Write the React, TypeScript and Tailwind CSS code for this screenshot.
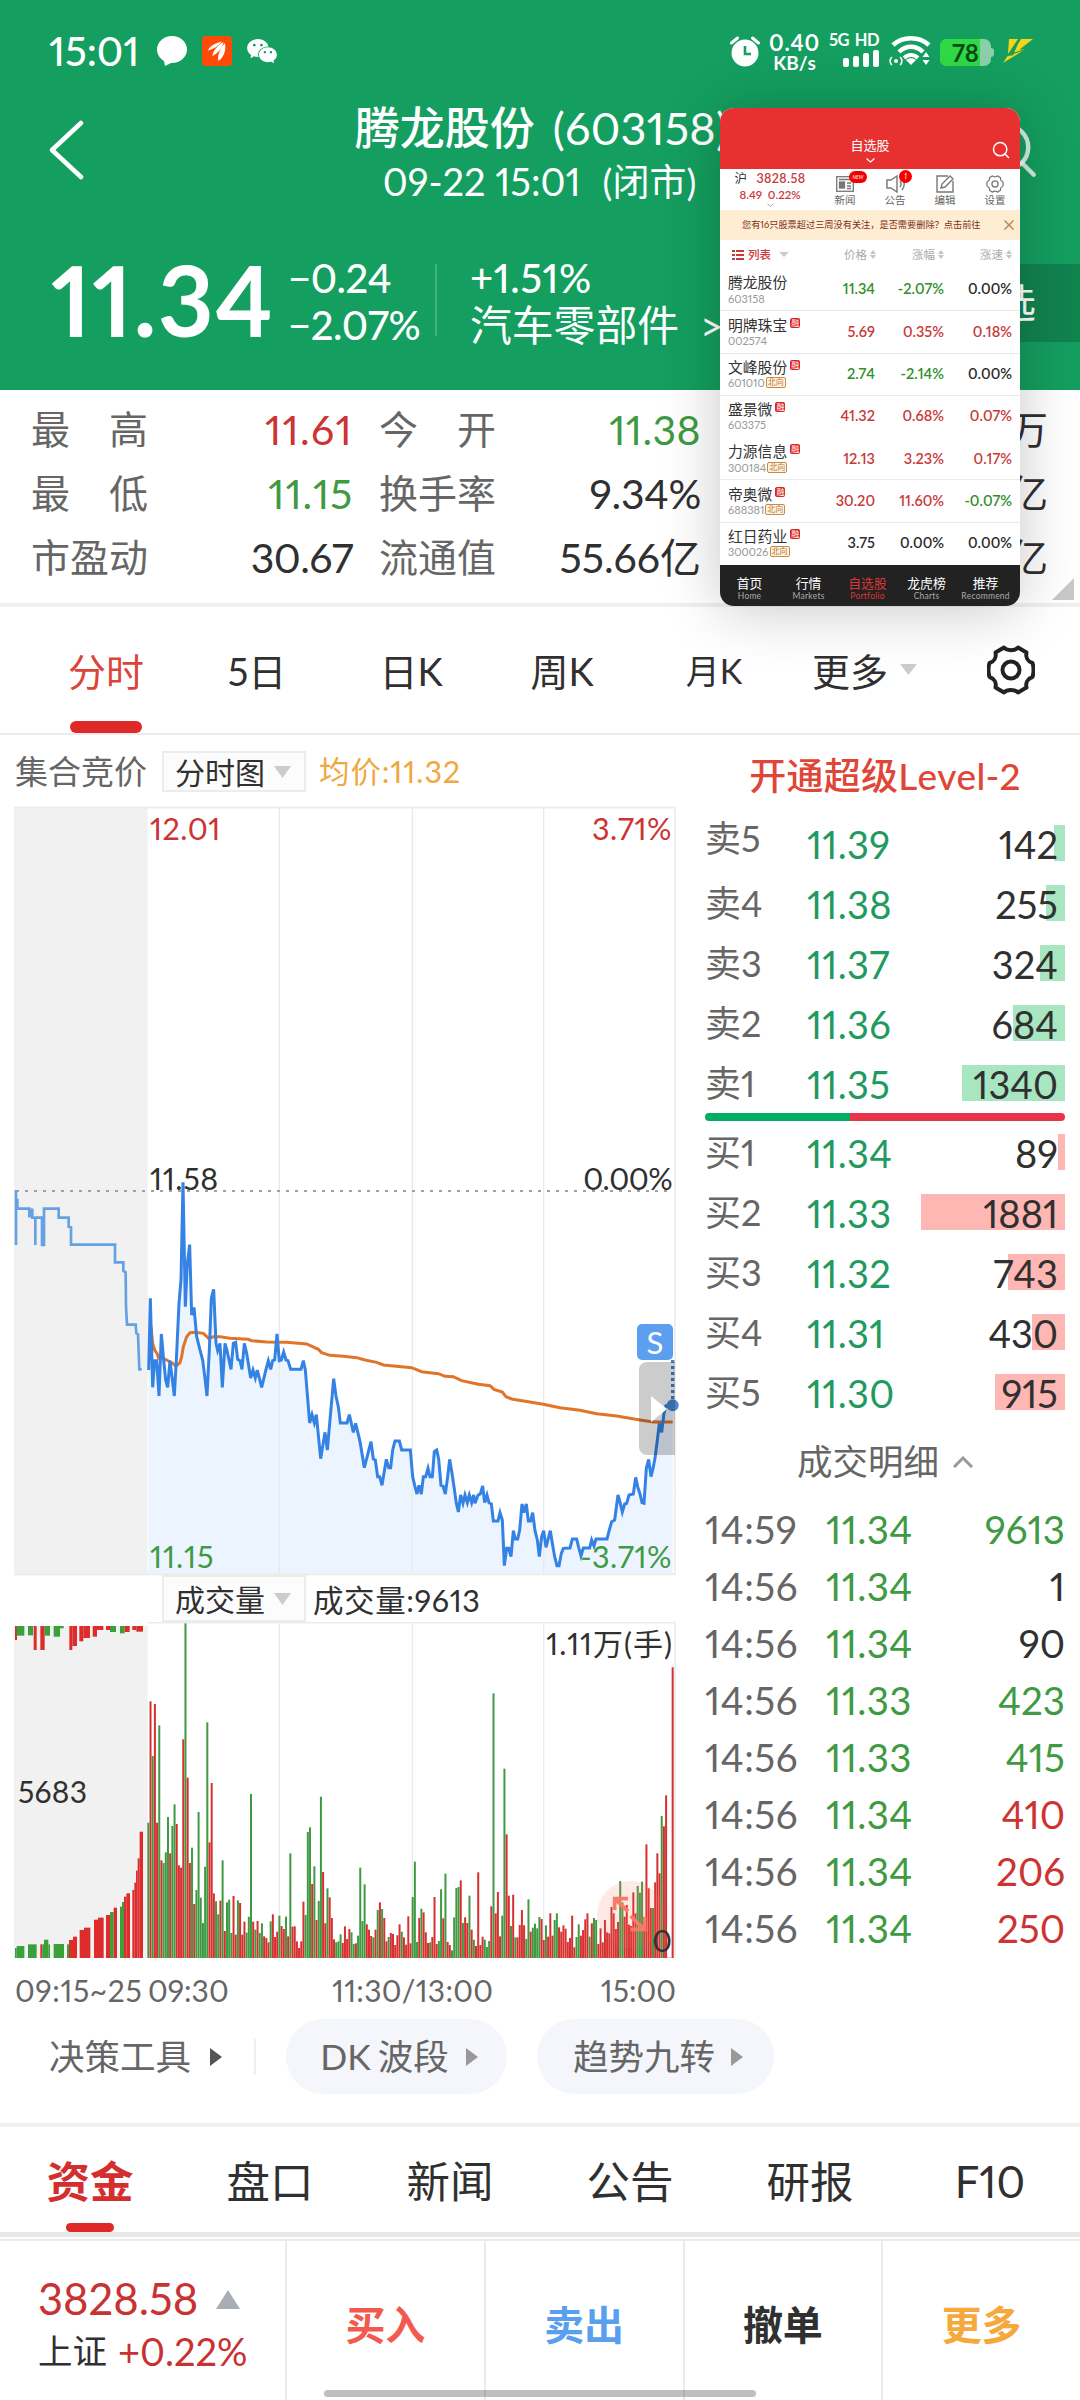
import { Search, X } from 'lucide-react';
import { AiFillWechat } from 'react-icons/ai';

const RED = '#d63030';
const GREEN = '#3f9a43';

const stats = [
  ['最　高', '11.61', 'text-[#cc3333] tracking-[1.3px]', '今　开', '11.38', 'text-[#3f9a43] tracking-[0.4px]', '万'],
  ['最　低', '11.15', 'text-[#3f9a43] tracking-[0.8px]', '换手率', '9.34%', 'text-[#303030] tracking-[-0.3px]', '亿'],
  ['市盈动', '30.67', 'text-[#303030] tracking-[-0.6px]', '流通值', '55.66亿', 'text-[#303030]', '亿'],
];

const sells = [
  { label: '卖5', price: '11.39', volume: 142, bar: 11 },
  { label: '卖4', price: '11.38', volume: 255, bar: 19 },
  { label: '卖3', price: '11.37', volume: 324, bar: 25 },
  { label: '卖2', price: '11.36', volume: 684, bar: 52 },
  { label: '卖1', price: '11.35', volume: 1340, bar: 103 },
];

const buys = [
  { label: '买1', price: '11.34', volume: 89, bar: 7 },
  { label: '买2', price: '11.33', volume: 1881, bar: 144 },
  { label: '买3', price: '11.32', volume: 743, bar: 57 },
  { label: '买4', price: '11.31', volume: 430, bar: 33 },
  { label: '买5', price: '11.30', volume: 915, bar: 70 },
];

const trades = [
  ['14:59', '11.34', '9613', 'text-[#3f9a43]'],
  ['14:56', '11.34', '1', 'text-[#303030]'],
  ['14:56', '11.34', '90', 'text-[#303030]'],
  ['14:56', '11.33', '423', 'text-[#3f9a43]'],
  ['14:56', '11.33', '415', 'text-[#3f9a43]'],
  ['14:56', '11.34', '410', 'text-[#cc3333]'],
  ['14:56', '11.34', '206', 'text-[#cc3333]'],
  ['14:56', '11.34', '250', 'text-[#cc3333]'],
];

const watchlist = [
  { name: '腾龙股份', code: '603158', price: '11.34', change: '-2.07%', speed: '0.00%', c: 'g', s: 'k', margin: false, north: false, line: true },
  { name: '明牌珠宝', code: '002574', price: '5.69', change: '0.35%', speed: '0.18%', c: 'r', s: 'r', margin: true, north: false, line: true },
  { name: '文峰股份', code: '601010', price: '2.74', change: '-2.14%', speed: '0.00%', c: 'g', s: 'k', margin: true, north: true, line: true },
  { name: '盛景微', code: '603375', price: '41.32', change: '0.68%', speed: '0.07%', c: 'r', s: 'r', margin: true, north: false, line: false },
  { name: '力源信息', code: '300184', price: '12.13', change: '3.23%', speed: '0.17%', c: 'r', s: 'r', margin: true, north: true, line: true },
  { name: '帝奥微', code: '688381', price: '30.20', change: '11.60%', speed: '-0.07%', c: 'r', s: 'g', margin: true, north: true, line: true },
  { name: '红日药业', code: '300026', price: '3.75', change: '0.00%', speed: '0.00%', c: 'k', s: 'k', margin: true, north: true, line: false },
];

const tone: Record<string, string> = {
  r: 'text-[#c83a3a]',
  g: 'text-[#2f8f2a]',
  k: 'text-[#2b2b2b]',
};

// pre-open auction price
const auctionLine =
  '48,150 48,315 48,180 52,180 52,206 88,206 88,232 97,206 97,233 106,233 106,315 106,233 126,233 126,315 132,315 132,206 176,206 176,233 206,233 206,260 213,262 213,314 345,314 345,367 370,367 370,393 377,397 378,500 381,554 407,554 409,580 414,583 416,635 418,688 425,688';

// minute price
const priceLine =
  '446,690 451,475 458,742 464,662 470,662 477,768 484,582 490,650 497,720 503,742 510,662 523,768 530,640 537,490 543,420 549,127 556,500 562,370 569,314 575,525 582,502 590,590 600,630 608,660 615,715 621,768 628,630 634,475 641,448 648,610 653,632 660,610 667,742 675,610 681,632 693,688 700,610 707,607 713,658 720,662 726,688 733,610 740,640 752,714 759,690 766,714 772,690 785,742 798,688 805,662 812,688 818,662 824,660 831,582 838,662 844,660 851,636 858,660 864,662 872,688 903,688 910,662 916,690 929,849 936,824 943,849 949,824 962,956 975,877 982,930 1001,716 1008,768 1015,800 1021,849 1041,849 1048,824 1060,877 1067,850 1080,905 1093,983 1113,905 1120,957 1126,960 1133,1010 1139,1010 1146,1036 1159,958 1166,983 1172,983 1178,930 1185,903 1198,903 1205,930 1231,930 1238,1010 1244,1036 1251,1062 1257,1036 1264,1062 1270,1010 1277,1010 1284,985 1290,1010 1297,1010 1303,935 1310,930 1316,957 1323,1036 1329,1038 1336,1062 1343,1010 1349,958 1356,1000 1362,1040 1369,1090 1375,1116 1382,1065 1389,1090 1395,1065 1402,1088 1408,1065 1415,1088 1421,1065 1425,1090 1434,1065 1441,1062 1448,1038 1454,1088 1461,1065 1467,1088 1474,1092 1480,1143 1494,1143 1500,1118 1507,1140 1513,1277 1520,1225 1526,1225 1533,1250 1540,1172 1546,1197 1553,1197 1559,1170 1566,1092 1572,1118 1579,1092 1585,1143 1592,1143 1598,1118 1605,1172 1612,1200 1618,1250 1625,1190 1631,1172 1638,1222 1651,1172 1657,1210 1664,1250 1671,1277 1677,1277 1684,1240 1690,1225 1710,1224 1717,1197 1730,1197 1736,1222 1743,1248 1750,1224 1769,1224 1775,1200 1782,1218 1788,1197 1821,1197 1828,1170 1835,1145 1844,1140 1854,1065 1861,1090 1867,1116 1874,1092 1880,1090 1887,1065 1900,1062 1907,1012 1913,1040 1920,1062 1926,1088 1932,1090 1939,985 1946,958 1953,1010 1959,985 1965,955 1972,900 1978,850 1985,877 1992,820 1998,797 2018,795';

// running average price
const averageLine =
  '453,560 458,610 464,630 471,640 476,655 490,655 500,660 515,668 528,678 540,668 545,650 550,620 560,590 570,578 585,577 610,580 627,596 640,590 660,590 690,595 745,598 755,602 800,606 860,607 920,612 955,628 965,638 990,646 1030,649 1070,653 1095,660 1130,667 1150,675 1235,683 1265,695 1315,701 1335,709 1360,710 1385,722 1435,733 1470,737 1482,748 1507,756 1518,770 1535,777 1630,793 1680,803 1740,811 1790,821 1850,828 1920,840 1960,846 2018,846';

// one entry per minute: direction + top of the bar
const volumes =
  'g788 r424 g588 r432 r788 g496 r901 g909 g877 g771 r880 g798 g733 r792 r916 r923 r538 g190 r653 r909 g863 r1032 g990 g756 g1013 g1089 g920 g487 r847 r669 r1000 g1024 g1063 r1022 g901 r1113 g1027 g1019 g1119 r1008 r1124 g1021 r1029 r1124 r1085 g1118 g1070 g702 r1085 g1109 r1083 g1119 g1090 r1129 r1134 r1147 g1084 r1063 r1131 r1115 g1067 r1098 r1107 g1070 r1129 g880 r1100 r1099 r1144 r1164 r1144 r1025 g1065 g816 g802 r972 g919 r1080 g1023 g710 r936 r1090 g985 r1012 r1074 r1138 g1147 g1144 g1123 r1149 r1099 r1137 r1107 g1117 g1152 r1150 g1127 g923 g1083 g973 r1093 r1109 r1128 g1132 r1109 g1050 r1027 g1047 r1074 r1144 g1131 r1119 r1122 r1155 r1126 r1093 g1115 r1132 r1154 r1069 r1150 g1011 g905 g1146 r1074 g1046 r1057 r1117 r1149 g1147 r1131 r1011 r1152 g1143 g988 r1075 g941 r1146 r1155 g1171 g1072 g984 g981 r961 g1089 r1072 r1089 g1007 r1109 g1139 r1158 r937 r1155 r1130 g1139 g1161 g1143 r1039 g400 r1060 r996 r1129 g1067 g626 r823 r1007 g1098 r1004 g1132 r1132 r1095 r1050 r1096 g1137 g1018 r1115 g1103 g1091 g1105 g1071 r1077 r1140 g1096 r1130 r1060 r1127 g1080 g1060 r1102 r1115 r1096 r1106 r1146 r1134 r1067 r1162 g1131 g1093 r1127 r1110 r1078 r1060 g1130 r1090 g1074 g1080 r1152 r1105 r1147 r1080 r1117 r1120 r1041 r1060 r1107 r1086 g963 g1027 r1070 r1035 r1094 r1098 r997 r1060 g978 g998 g965 r1090 r853 r985 r1044 g1044 r967 r880 r940 g768 r799 r706 r1193 r1193 r322'.split(' ');

// auction bars: [direction, x, width, edge]
const unmatched: [string, number, number, number][] = [
  ['r', 45, 6, 240], ['g', 50, 23, 227], ['g', 84, 15, 226], ['r', 101, 9, 270], ['r', 121, 13, 270],
  ['g', 134, 16, 227], ['g', 161, 19, 230], ['g', 180, 11, 205], ['r', 208, 9, 270], ['r', 217, 14, 258],
  ['r', 238, 12, 244], ['r', 250, 20, 234], ['r', 278, 13, 230], ['r', 291, 19, 210], ['r', 318, 12, 210],
  ['g', 330, 18, 216], ['g', 360, 14, 220], ['r', 374, 15, 216], ['r', 397, 12, 210], ['r', 409, 20, 215],
];
const matched: [string, number, number, number][] = [
  ['g', 45, 5, 1164], ['g', 50, 23, 1158], ['g', 84, 26, 1153], ['r', 121, 6, 1153], ['g', 127, 6, 1153],
  ['g', 132, 13, 1139], ['g', 145, 5, 1153], ['g', 161, 31, 1152], ['g', 201, 7, 1153], ['r', 207, 12, 1140],
  ['r', 219, 12, 1130], ['r', 239, 13, 1110], ['r', 252, 19, 1103], ['r', 282, 12, 1079], ['r', 294, 17, 1073],
  ['r', 318, 12, 1065], ['g', 330, 11, 1056], ['r', 341, 10, 1043], ['g', 360, 6, 1040], ['g', 366, 6, 1026],
  ['r', 372, 7, 1010], ['r', 379, 11, 1000], ['r', 397, 6, 990], ['r', 403, 5, 968], ['r', 408, 5, 932],
  ['r', 413, 6, 895], ['r', 419, 10, 815],
];

function StatusBar() {
  return (
    <div className="h-[100px] pt-[34px] pl-[49px] pr-[47px] flex items-start justify-between text-white">
      <div className="flex items-center h-[34px]">
        <span className="w-[108px] text-[40px] leading-none font-medium">15:01</span>
        <svg className="w-[30px] h-[30px]" viewBox="0 0 30 30" fill="white">
          <path d="M15 0C6.700 0 0 6 0 13.500c0 4.800 2.800 9 7 11.400L8 30l6-3h1c8.300 0 15-6 15-13.500S23.300 0 15 0z" />
        </svg>
        <svg className="ml-[15px] w-[30px] h-[30px]" viewBox="0 0 30 30">
          <rect width="30" height="30" rx="4" fill="#ff4a08" />
          <path d="M6 14.500C7.500 10 13 7.500 20 5.500 17 9.500 12 13 6 14.500zM10.500 20C10.500 15.500 15 10 21.500 6 20.500 11.500 16.500 17 10.500 20zM16.500 25C15 20 18 12.500 22.800 7 24.500 13 22.500 20.500 16.500 25z" fill="white" />
        </svg>
        <AiFillWechat className="ml-[13px] size-[34px]" />
      </div>

      <div className="flex items-start h-[34px]">
        <svg className="mt-[2px] w-[30px] h-[31px]" viewBox="0 0 30 31" fill="none">
          <circle cx="15" cy="17" r="13.500" fill="white" />
          <path d="M1.500 7 7.500 2M28.500 7l-6-5" stroke="white" strokeWidth="3" strokeLinecap="round" />
          <path d="M15 10v8h6" stroke="#149e5f" strokeWidth="2.600" />
        </svg>
        <div className="ml-[9px] w-[51px] text-center font-bold leading-none">
          <div className="text-[22px] leading-[17px] tracking-[0.8px]">0.40</div>
          <div className="mt-[3px] text-[19px] leading-[17px]">KB/s</div>
        </div>
        <div className="ml-[9px] w-[50px]">
          <div className="flex justify-between text-[16.500px] leading-[12px] font-bold tracking-[-0.5px]">
            <span>5G</span>
            <span>HD</span>
          </div>
          <div className="mt-[4px] flex items-end justify-end gap-[4px] h-[17px]">
            <i className="w-[6px] h-[9px] bg-white rounded-[2px]" />
            <i className="w-[6px] h-[11px] bg-white rounded-[2px]" />
            <i className="w-[6px] h-[14px] bg-white rounded-[2px]" />
            <i className="w-[6px] h-[17px] bg-white rounded-[2px]" />
          </div>
        </div>
        <svg className="ml-[10px] mt-[2px] w-[42px] h-[30px]" viewBox="0 0 42 30" fill="none" stroke="white">
          <path d="M4 9c10-9 26-9 36 0" strokeWidth="4.500" />
          <path d="M10 16c7-7 17-7 24 0" strokeWidth="4.500" />
          <path d="M15 22c4-4 10-4 14 0" strokeWidth="4" />
          <path d="M22 29l-5-5c3-2.500 7-2.500 10 0z" fill="white" stroke="none" />
          <circle cx="7" cy="25" r="2" fill="white" stroke="none" />
          <path d="M3 21c-2.500 2-2.500 6 0 8M11 21c2.500 2 2.500 6 0 8" strokeWidth="1.600" />
          <path d="M37 16l3.500 5h-7zM37 29l3.500-5h-7z" fill="white" stroke="none" />
        </svg>
        <div className="ml-[9px] mt-[5px] flex items-center">
          <div className="relative w-[51px] h-[27px] rounded-[7px] overflow-hidden bg-[#8acfa9]">
            <div className="w-[40px] h-full bg-[#2fd845]" />
            <span className="absolute inset-0 text-center text-[24px] leading-[27px] font-bold text-[#0b4a18]">78</span>
          </div>
          <i className="w-[3px] h-[9px] bg-[#8acfa9] rounded-r" />
        </div>
        <svg className="ml-[9px] mt-[4px] w-[30px] h-[26px]" viewBox="0 0 30 26" fill="#f7d516">
          <path d="M6 1h9L5 16zM17 1h13L16.500 11.500H22L0 25l5-7.500h5L17 1z" />
          <path d="M17.500 1 7 16.500M22 11.500 5 17.500" stroke="#149e5f" strokeWidth="1.200" />
        </svg>
      </div>
    </div>
  );
}

function Header() {
  return (
    <div className="h-[390px] bg-[#149e5f] text-white">
      <StatusBar />
      <div className="flex items-start justify-between h-[110px] pl-[49px] pr-[38px]">
        <svg className="mt-[20px] w-[36px] h-[60px]" viewBox="0 0 36 60" fill="none" stroke="white" strokeWidth="4.500" strokeLinecap="round" strokeLinejoin="round">
          <path d="M32 3 3 30l29 27" />
        </svg>
        <div className="w-[394px] pt-[2px] pl-[22px] flex flex-col items-center whitespace-nowrap">
          <div className="h-[52px] flex items-center gap-[18px] text-[45px] leading-none">
            <span className="font-medium">腾龙股份</span>
            <span className="tracking-[0.2px]">(603158)</span>
          </div>
          <div className="h-[54px] -ml-[4px] flex items-center gap-[22px] text-[38px] leading-none">
            <span>09-22 15:01</span>
            <span className="text-[37px]">(闭市)</span>
          </div>
        </div>
        <Search className="mt-[17px] size-[66px] text-white/80" strokeWidth={1.6} />
      </div>
      <div className="flex items-center h-[180px] pl-[51px]">
        <div className="w-[237px] text-[97px] leading-none font-bold tracking-[1.2px] pb-[2px]">11.34</div>
        <div className="w-[147px] h-[90px] pt-[3px] flex flex-col justify-between text-[40px] leading-[40px] font-medium tracking-[-0.5px] whitespace-nowrap">
          <span>−0.24</span>
          <span>−2.07%</span>
        </div>
        <div className="w-[2px] h-[72px] bg-white/20" />
        <div className="ml-[33px] w-[230px] h-[90px] pt-[3px] flex flex-col justify-between text-[40px] leading-[40px] font-medium whitespace-nowrap">
          <span className="tracking-[0.5px]">+1.51%</span>
          <span className="text-[41.800px] font-normal">汽车零部件</span>
        </div>
        <span className="pt-[52px] text-[40px] leading-none">&gt;</span>
        <div className="ml-auto mt-[6px] w-[170px] h-[78px] pr-[44px] bg-[#10834f] flex items-center justify-end text-[40px]">选</div>
      </div>
    </div>
  );
}

function Stats() {
  return (
    <div className="h-[217px] bg-white border-b-4 border-[#f0f0f0] pt-[7px] relative">
      {stats.map(([a, av, ac, b, bv, bc, c]) => (
        <div key={a} className="h-[64px] pl-[31px] pr-[32px] flex items-center text-[39px] leading-none whitespace-nowrap">
          <span className="w-[130px] text-[#666]">{a}</span>
          <span className={`w-[192px] text-right text-[41px] ${ac}`}>{av}</span>
          <span className="ml-[26px] w-[130px] text-[#666]">{b}</span>
          <span className={`w-[192px] text-right text-[41px] ${bc}`}>{bv}</span>
          <span className="ml-auto text-right text-[#303030]">{c}</span>
        </div>
      ))}
      <svg className="absolute right-[6px] bottom-[3px] w-[22px] h-[22px]" viewBox="0 0 22 22" fill="#c8c8c8">
        <path d="M22 0v22H0z" />
      </svg>
    </div>
  );
}

function GearIcon({ className, strokeWidth = 4 }: { className: string; strokeWidth?: number }) {
  return (
    <svg className={className} viewBox="0 0 48 50" fill="none" stroke="currentColor" strokeWidth={strokeWidth} strokeLinejoin="round">
      <path d="M17 2.500C20 6 28 6 31 2.500L39.500 7.500C38.500 12 40.500 16.500 45.500 18 47 23 47 27 45.500 32 40.500 33.500 38.500 38 39.500 42.500L31 47.500C28 44 20 44 17 47.500L8.500 42.500C9.500 38 7.500 33.500 2.500 32 1 27 1 23 2.500 18 7.500 16.500 9.500 12 8.500 7.500z" />
      <circle cx="24" cy="25" r="8.500" />
    </svg>
  );
}

function ChartTabs() {
  return (
    <div className="h-[128px] border-b-2 border-[#ececec] flex items-stretch text-[38px] leading-none text-[#303030] whitespace-nowrap">
      <div className="w-[212px] flex flex-col items-center text-[#dc4437]">
        <span className="h-[114px] pt-[45px]">分时</span>
        <i className="w-[72px] h-[12px] rounded-full bg-[#e02828]" />
      </div>
      <span className="w-[90px] pt-[45px] text-center">5日</span>
      <span className="w-[218px] pt-[45px] text-center">日K</span>
      <span className="w-[84px] pt-[45px] text-center">周K</span>
      <span className="w-[220px] pt-[47px] text-center text-[34px]">月K</span>
      <div className="w-[163px] pt-[45px] flex justify-start gap-[12px]">
        <span className="-ml-[12px]">更多</span>
        <svg className="mt-[12px] w-[17px] h-[11px]" viewBox="0 0 17 11" fill="#cccccc"><path d="M0 0h17L8.500 11z" /></svg>
      </div>
      <GearIcon className="mt-[38px] w-[48px] h-[50px] text-[#222]" />
    </div>
  );
}

function PickBox({ text }: { text: string }) {
  return (
    <div className="w-[144px] h-full border-2 border-[#ececec] bg-[#fcfcfc] flex items-center pl-[11px] gap-[9px] text-[30px] leading-none text-[#303030]">
      <span>{text}</span>
      <svg className="w-[17px] h-[12px]" viewBox="0 0 17 12" fill="#cccccc"><path d="M0 0h17L8.500 12z" /></svg>
    </div>
  );
}

function PriceChart() {
  return (
    <div className="relative h-[768px]">
      <svg className="block w-[662px] h-[768px] overflow-visible" viewBox="42 -999 1986 2304" fill="none">
        <rect x="42" y="-999" width="401" height="2304" fill="#f1f1f1" />
        <path d={`M446 1302 L${priceLine} L2018 1302z`} fill="#ecf4ff" />
        <path d="M838-999v2304M1237-999v2304M1631-999v2304" stroke="#e6e9ee" strokeWidth="4" />
        <path d="M42-997H2025V1303H42" stroke="#ececec" strokeWidth="5" />
        <path d="M48 153H2018" stroke="#a0a0a0" strokeWidth="6" strokeDasharray="9 18" />
        <polyline points={auctionLine} stroke="#66a1e4" strokeWidth="8" />
        <polyline points={averageLine} stroke="#e0752a" strokeWidth="9" />
        <polyline points={priceLine} stroke="#3482e4" strokeWidth="9" />
        <path d="M2018 660V790" stroke="#4a82c8" strokeWidth="10" strokeDasharray="9 9" />
        <circle cx="2018" cy="796" r="18" fill="#4a86d4" />
      </svg>
      <div className="absolute inset-0 text-[30.500px] leading-none text-[#303030]">
        <span className="absolute left-[136px] top-[6px] text-[#cc3333] tracking-[0.4px]">12.01</span>
        <span className="absolute right-[4px] top-[6px] text-[#cc3333] tracking-[0.5px]">3.71%</span>
        <span className="absolute left-[136px] top-[356px] tracking-[0.6px]">11.58</span>
        <span className="absolute right-[4px] top-[356px] tracking-[-0.6px]">0.00%</span>
        <span className="absolute left-[136px] top-[734px] text-[#3f9a43] tracking-[0.9px]">11.15</span>
        <span className="absolute right-[4px] top-[734px] text-[#3f9a43] tracking-[0.5px]">-3.71%</span>
      </div>
      <div className="absolute left-[623px] top-[517px] w-[36px] h-[36px] rounded-[5px] bg-[#5c9ff0] text-white text-[31px] leading-[36px] text-center">S</div>
      <div className="absolute left-[625px] top-[555px] w-[36px] h-[93px] rounded-l-[8px] bg-black/20 flex items-center pl-[12px]">
        <svg className="w-[16px] h-[26px]" viewBox="0 0 16 26" fill="white"><path d="M0 0 16 13 0 26z" /></svg>
      </div>
    </div>
  );
}

function VolumeChart() {
  const fill = (d: string) => (d === 'r' ? '#de2b2b' : '#3aa03a');
  return (
    <div className="relative h-[336px]">
      <svg className="block w-[662px] h-[336px]" viewBox="42 186 1986 1008">
        <rect x="42" y="198" width="401" height="996" fill="#f1f1f1" />
        <path d="M838 186v1008M1237 186v1008M1631 186v1008" stroke="#ebebeb" strokeWidth="4" />
        <path d="M443 188H2025V1194" stroke="#ececec" strokeWidth="5" fill="none" />
        {unmatched.map(([d, x, w, edge]) => (
          <rect key={x} x={x} y="198" width={w} height={edge - 198} fill={fill(d)} />
        ))}
        {matched.map(([d, x, w, edge]) => (
          <rect key={x} x={x} y={edge} width={w} height={1194 - edge} fill={fill(d)} />
        ))}
        {volumes.map((v, i) => {
          const top = Number(v.slice(1));
          return <rect key={i} x={442 + i * 6.554} y={top} width="6" height={1194 - top} fill={v[0] === 'r' ? RED : GREEN} />;
        })}
        <circle cx="1892" cy="1064" r="101" fill="#f86a5a" opacity="0.150" />
        <path d="M1844 1050v-34h40M1844 1016l40 38M1934 1070v38h-42M1932 1108l-40-40" stroke="#fa7a6a" strokeWidth="11" fill="none" />
      </svg>
      <div className="absolute inset-0 text-[30px] leading-none text-[#303030]">
        <span className="absolute left-[4px] top-[154px] tracking-[0.3px]">5683</span>
        <span className="absolute right-[3px] top-[6px] tracking-[1px]">1.11万(手)</span>
        <span className="absolute right-[4px] bottom-[3px]">0</span>
      </div>
    </div>
  );
}

function ChartColumn() {
  return (
    <div className="w-[662px] ml-[14px]">
      <div className="h-[72px] pt-[16px] pb-[15px] flex items-center text-[33px] leading-none text-[#666] whitespace-nowrap">
        <span className="w-[148px] pl-[1px]">集合竞价</span>
        <PickBox text="分时图" />
        <span className="ml-[13px] text-[30.500px] tracking-[0.9px] text-[#f0a840]">均价:11.32</span>
      </div>
      <PriceChart />
      <div className="h-[47px] pl-[148px] flex items-center">
        <PickBox text="成交量" />
        <span className="ml-[7px] pt-[4px] text-[30.500px] leading-none tracking-[0.6px] text-[#303030]">成交量:9613</span>
      </div>
      <VolumeChart />
      <div className="h-[61px] pt-[2px] flex items-center text-[30px] leading-none text-[#666] whitespace-nowrap">
        <span className="w-[134px] pl-[1px] tracking-[0.6px]">09:15~25</span>
        <span className="w-[184px]">09:30</span>
        <span className="tracking-[0.3px]">11:30/13:00</span>
        <span className="ml-auto">15:00</span>
      </div>
    </div>
  );
}

interface Level {
  label: string;
  price: string;
  volume: number;
  bar: number;
}

function LevelRow({ level, barClass, labelClass = '' }: { level: Level; barClass: string; labelClass?: string }) {
  return (
    <div className="relative h-[36px] flex items-center text-[38px] leading-none">
      <i className={`absolute right-0 top-0 h-full ${barClass}`} style={{ width: level.bar }} />
      <span className={`relative w-[102px] text-[36px] text-[#666] ${labelClass}`}>{level.label}</span>
      <span className="relative pt-[2px] tracking-[0.3px] text-[#1f9a60]">{level.price}</span>
      <span className="relative pt-[2px] ml-auto pr-[7px] text-[#303030]">{level.volume}</span>
    </div>
  );
}

function OrderBook() {
  return (
    <div className="w-[360px] ml-[29px]">
      <div className="h-[90px] pt-[22px] text-center text-[37px] leading-none font-medium tracking-[0.2px] text-[#df4638] whitespace-nowrap">开通超级Level-2</div>
      <div className="flex flex-col gap-[24px]">
        {sells.map((s, i) => <LevelRow key={s.label} level={s} barClass="bg-[#a8e6c1]" labelClass={i === 0 ? '-mt-[10px]' : ''} />)}
      </div>
      <div className="mt-[12px] mb-[13px] h-[8px] flex rounded-full overflow-hidden">
        <i className="w-[145px] bg-[#00ad62]" />
        <i className="flex-1 bg-[#ea3349]" />
      </div>
      <div className="flex flex-col gap-[24px]">
        {buys.map((b) => <LevelRow key={b.label} level={b} barClass="bg-[#ffb7b4]" />)}
      </div>
      <div className="h-[91px] pt-[13px] pl-[92px] flex items-center gap-[14px] text-[35.500px] leading-none text-[#666]">
        <span>成交明细</span>
        <svg className="w-[20px] h-[12px]" viewBox="0 0 20 12" fill="none" stroke="#999" strokeWidth="3"><path d="M1 11 10 2l9 9" /></svg>
      </div>
      {trades.map(([time, price, volume, cls], i) => (
        <div key={i} className="h-[57px] flex items-center text-[38.500px] leading-none">
          <span className="w-[121px] tracking-[0.5px] text-[#666]">{time}</span>
          <span className="tracking-[0.4px] text-[#3f9a43]">{price}</span>
          <span className={`ml-auto ${cls}`}>{volume}</span>
        </div>
      ))}
    </div>
  );
}

function Arrow({ color }: { color: string }) {
  return <svg className="w-[12px] h-[18px]" viewBox="0 0 12 18" fill={color}><path d="M0 0 12 9 0 18z" /></svg>;
}

function Tools() {
  return (
    <div className="h-[108px] flex items-start border-b-4 border-[#f0f0f0] text-[35.500px] leading-none text-[#666] whitespace-nowrap">
      <div className="h-[75px] w-[254px] pl-[49px] flex items-center gap-[19px]">
        <span>决策工具</span>
        <Arrow color="#555" />
      </div>
      <i className="mt-[20px] w-[2px] h-[36px] bg-[#eee]" />
      <div className="ml-[30px] w-[221px] h-[75px] pl-[5px] rounded-full bg-[#f4f6fb] flex items-center justify-center gap-[17px]">
        <span className="[word-spacing:-2px]">DK 波段</span>
        <Arrow color="#999" />
      </div>
      <div className="ml-[30px] w-[237px] h-[75px] pl-[5px] rounded-full bg-[#f4f6fb] flex items-center justify-center gap-[16px]">
        <span>趋势九转</span>
        <Arrow color="#999" />
      </div>
    </div>
  );
}

function BottomTabs() {
  return (
    <div className="h-[110px] border-b-[5px] border-[#e8e8e8] grid grid-cols-6 text-center text-[43.500px] leading-none text-[#303030]">
      <div className="flex flex-col items-center text-[#d42f2f] font-bold">
        <span className="h-[96px] pt-[33px]">资金</span>
        <i className="w-[48px] h-[9px] rounded-full bg-[#e02828]" />
      </div>
      {['盘口', '新闻', '公告', '研报', 'F10'].map((t) => (
        <span key={t} className="pt-[33px]">{t}</span>
      ))}
    </div>
  );
}

function TradeBar() {
  return (
    <div className="relative mt-[2px] h-[161px] border-t-2 border-[#ebebeb] flex text-[40px] leading-none font-bold">
      <div className="w-[287px] pl-[38px] pt-[33px] font-normal border-r-2 border-[#ebebeb]">
        <div className="h-[50px] flex items-center gap-[18px] text-[43.500px] text-[#c83232]">
          3828.58
          <svg className="w-[24px] h-[19px]" viewBox="0 0 24 19" fill="#a9aeb4"><path d="M12 0 24 19H0z" /></svg>
        </div>
        <div className="h-[54px] flex items-center gap-[11px] text-[34.500px] text-[#303030]">
          上证 <span className="text-[38px] text-[#c83232]">+0.22%</span>
        </div>
      </div>
      <div className="flex-1 flex items-center justify-center pt-[8px] border-r-2 border-[#ebebeb] text-[#f25a50]">买入</div>
      <div className="flex-1 flex items-center justify-center pt-[8px] border-r-2 border-[#ebebeb] text-[#5a9fee]">卖出</div>
      <div className="flex-1 flex items-center justify-center pt-[8px] border-r-2 border-[#ebebeb] text-[#303030]">撤单</div>
      <div className="flex-1 flex items-center justify-center pt-[8px] text-[#f5a83c]">更多</div>
      <i className="absolute left-[324px] bottom-[3px] w-[432px] h-[7px] rounded-full bg-black/25" />
    </div>
  );
}

function Sort() {
  return <svg className="w-[6px] h-[9px]" viewBox="0 0 6 9" fill="#c4c4c4"><path d="M3 0l3 4H0zM3 9l3-4H0z" /></svg>;
}

function FloatingWindow() {
  return (
    <div className="absolute left-[720px] top-[108px] w-[300px] h-[498px] rounded-[14px] overflow-hidden bg-white shadow-[0_4px_60px_rgba(0,0,0,0.22)] leading-none whitespace-nowrap">
      <div className="relative h-[61px] bg-[#e73131] text-white text-center pt-[31px] text-[13px]">
        自选股
        <svg className="mx-auto mt-[6px] w-[9px] h-[5px]" viewBox="0 0 9 5" fill="none" stroke="white" strokeWidth="1.200"><path d="M.5.500 4.500 4l4-3.500" /></svg>
        <Search className="absolute right-[9px] top-[32px] size-[20px]" strokeWidth={1.8} />
      </div>
      <div className="h-[41px] flex text-[#666] text-[10.500px]">
        <div className="w-[100px] pt-[4px] text-[#c83a3a] font-semibold text-center">
          <div className="text-[12.500px] tracking-[0.4px]"><span className="mr-[9px] font-normal text-[#333]">沪</span>3828.58</div>
          <div className="mt-[3px] text-[11.500px]">8.49&nbsp; 0.22%</div>
          <svg className="mx-auto mt-[3px] w-[7px] h-[4px]" viewBox="0 0 7 4" fill="none" stroke="#aaa"><path d="M.5.500 3.500 3.500l3-3" /></svg>
        </div>
        <div className="relative w-[50px] flex flex-col items-center pt-[7px]">
          <svg className="w-[18px] h-[16px]" viewBox="0 0 18 16" fill="none" stroke="#777" strokeWidth="1.300">
            <rect x=".7" y=".7" width="16.600" height="14.600" />
            <rect x="3.500" y="6" width="5" height="6" fill="#777" />
            <path d="M3 3.500h12M11 7h4M11 10h4M11 12.500h4" />
          </svg>
          <span className="mt-[3px]">新闻</span>
          <i className="absolute left-[29px] top-[2px] w-[18px] h-[12px] rounded-full bg-[#f50000] text-[5px] leading-[12px] text-white text-center">NEW</i>
        </div>
        <div className="relative w-[50px] flex flex-col items-center pt-[6px]">
          <svg className="w-[19px] h-[18px]" viewBox="0 0 19 18" fill="none" stroke="#777" strokeWidth="1.400">
            <path d="M1 5h4l6-4v16l-6-4H1zM14 6c1.500 2 1.500 4 0 6M16 3c3 4 3 8 0 12" />
          </svg>
          <span className="mt-[2px]">公告</span>
          <i className="absolute left-[29px] top-[1px] size-[13px] rounded-full bg-[#f50000] text-[7px] leading-[13px] text-white text-center">1</i>
        </div>
        <div className="w-[50px] flex flex-col items-center pt-[6px]">
          <svg className="w-[18px] h-[18px]" viewBox="0 0 18 18" fill="none" stroke="#777" strokeWidth="1.400">
            <path d="M12 1H1v16h16V6M5 13l1-4 8-8 3 3-8 8z" />
          </svg>
          <span className="mt-[2px]">编辑</span>
        </div>
        <div className="w-[50px] flex flex-col items-center pt-[6px]">
          <GearIcon className="w-[18px] h-[18px] text-[#777]" strokeWidth={3.5} />
          <span className="mt-[2px]">设置</span>
        </div>
      </div>
      <div className="h-[30px] bg-[#ffedd3] flex items-center justify-between pl-[22px] pr-[3px] text-[9.200px] text-[#7a3018]">
        您有16只股票超过三周没有关注，是否需要删除？点击前往
        <X className="size-[16px] text-[#bf8a56]" strokeWidth={2.5} />
      </div>
      <div className="h-[29px] flex items-center text-[11.500px] text-[#aaa]">
        <svg className="ml-[12px] w-[12px] h-[10px]" viewBox="0 0 12 10" fill="#c83a3a"><path d="M0 0h3v2H0zM4 0h8v2H4zM0 4h3v2H0zM4 4h8v2H4zM0 8h3v2H0zM4 8h8v2H4z" /></svg>
        <span className="ml-[4px] font-medium text-[#c83a3a]">列表</span>
        <svg className="ml-[8px] w-[10px] h-[5px]" viewBox="0 0 10 5" fill="#ccc"><path d="M0 0h10L5 5z" /></svg>
        <span className="w-[87px] flex items-center justify-end gap-[3px]">价格 <Sort /></span>
        <span className="w-[68px] flex items-center justify-end gap-[3px]">涨幅 <Sort /></span>
        <span className="w-[68px] flex items-center justify-end gap-[3px]">涨速 <Sort /></span>
      </div>
      {watchlist.map((w) => (
        <div key={w.code} className={`h-[42.300px] flex items-center pl-[8px] pr-[8px] text-[14.500px] font-semibold border-b ${w.line ? 'border-[#eaeaea]' : 'border-transparent'}`}>
          <div className="w-[76px] font-normal">
            <div className="flex text-[14.800px] text-[#333]">
              {w.name}
              {w.margin && <i className="ml-[3px] size-[10px] rounded-[2px] bg-[#d92323] text-white text-[8px] leading-[10px] not-italic text-center">融</i>}
            </div>
            <div className="mt-[2px] h-[12px] flex items-center text-[11px] text-[#999]">
              {w.code}
              {w.north && <i className="ml-[1px] px-[1px] h-[11px] rounded-[2px] border border-[#c98a4a] bg-[#fff3e2] text-[#c07830] text-[8px] leading-[9px] not-italic">北向</i>}
            </div>
          </div>
          <span className={`w-[71px] text-right ${tone[w.c]}`}>{w.price}</span>
          <span className={`w-[69px] text-right ${tone[w.c]}`}>{w.change}</span>
          <span className={`w-[68px] text-right ${tone[w.s]}`}>{w.speed}</span>
        </div>
      ))}
      <div className="h-[44px] pr-[5px] bg-[#222] grid grid-cols-5 text-center text-white text-[12.800px]">
        {[['首页', 'Home'], ['行情', 'Markets'], ['自选股', 'Portfolio'], ['龙虎榜', 'Charts'], ['推荐', 'Recommend']].map(([zh, en]) => (
          <div key={en} className={`pt-[12px] ${en === 'Portfolio' ? 'text-[#dd3535]' : ''}`}>
            {zh}
            <div className={`mt-[2px] text-[8.500px] tracking-[0.2px] ${en === 'Portfolio' ? '' : 'text-[#aaa]'}`}>{en}</div>
          </div>
        ))}
      </div>
    </div>
  );
}

export default function App() {
  return (
    <div className="relative w-[1080px] h-[2400px] overflow-hidden bg-white proportional-nums [font-kerning:none] font-[Lato,'Noto_Sans_CJK_SC',sans-serif]">
      <Header />
      <Stats />
      <ChartTabs />
      <div className="h-[1284px] flex items-start">
        <ChartColumn />
        <OrderBook />
      </div>
      <Tools />
      <BottomTabs />
      <TradeBar />
      <FloatingWindow />
    </div>
  );
}
